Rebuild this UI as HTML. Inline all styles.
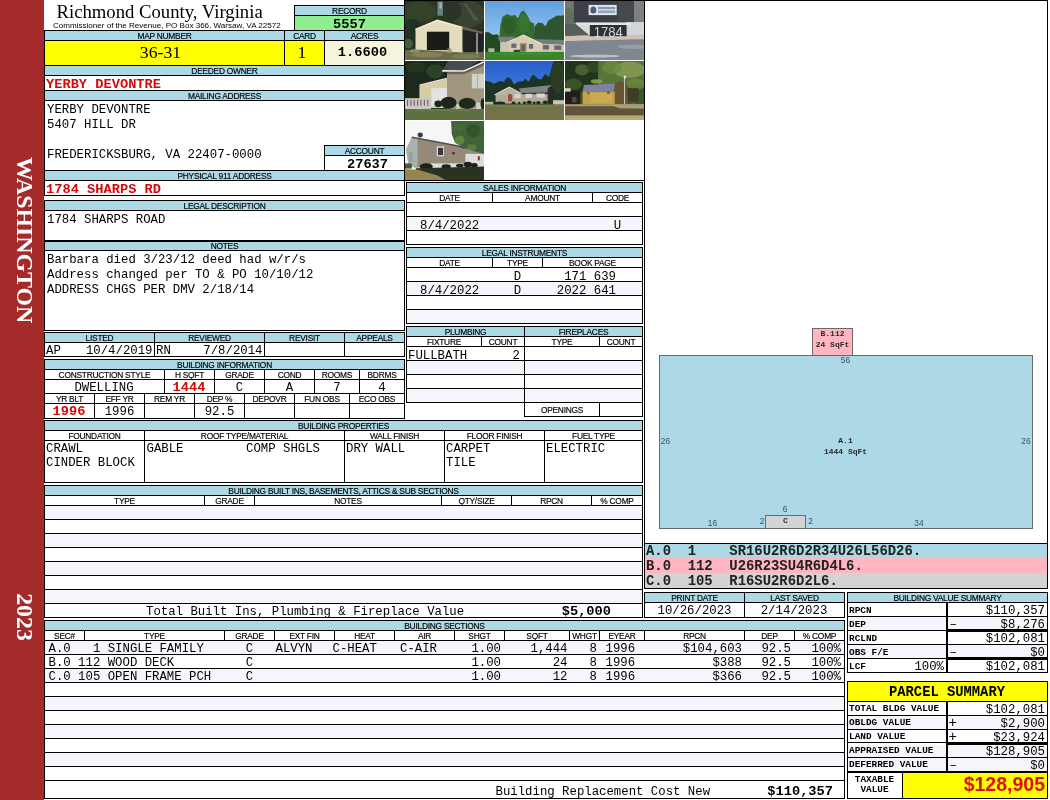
<!DOCTYPE html>
<html><head><meta charset="utf-8"><title>Property Card</title>
<style>
*{box-sizing:border-box;margin:0;padding:0}
html,body{width:1050px;height:800px;overflow:hidden;background:#fff}
body{position:relative;font-family:"Liberation Sans",sans-serif;will-change:transform}
.a{position:absolute}
</style></head><body>
<div class="a" style="left:0px;top:0px;width:44px;height:800px;background:#a52a2a;"></div>
<div class="a" style="left:0;top:0;width:44px;height:800px;"><div class="a" style="left:25px;top:240px;width:0;height:0;"><div style="position:absolute;transform:translate(-50%,-50%) rotate(90deg);font:bold 23.8px/28px 'Liberation Serif',serif;color:#fff;white-space:pre;">WASHINGTON</div></div><div class="a" style="left:25px;top:617px;width:0;height:0;"><div style="position:absolute;transform:translate(-50%,-50%) rotate(90deg);font:bold 23.8px/28px 'Liberation Serif',serif;color:#fff;white-space:pre;">2023</div></div></div>
<div class="a" style="top:1px;font:18.7px/22px 'Liberation Serif',serif;color:#000;white-space:pre;left:56.5px;">Richmond County, Virginia</div>
<div class="a" style="top:21px;font:8.05px/10px 'Liberation Sans',sans-serif;color:#000;white-space:pre;left:53px;">Commissioner of the Revenue, PO Box 366, Warsaw, VA 22572</div>
<div class="a" style="left:294px;top:5px;width:111px;height:26px;background:#90ee90;border:1px solid #000;"></div>
<div class="a" style="left:294px;top:5px;width:111px;height:11px;background:#add8e6;border:1px solid #000;"></div>
<div class="a" style="top:6px;font:8.4px/10px 'Liberation Sans',sans-serif;color:#000;white-space:pre;left:274.5px;width:150px;text-align:center;letter-spacing:-0.25px;-webkit-text-stroke:0.15px #000;">RECORD</div>
<div class="a" style="top:17px;font:bold 13.7px/16px 'Liberation Mono',monospace;color:#000;white-space:pre;left:299.5px;width:100px;text-align:center;">5557</div>
<div class="a" style="left:44px;top:30px;width:361px;height:11px;background:#add8e6;border:1px solid #000;"></div>
<div class="a" style="top:31px;font:8.4px/10px 'Liberation Sans',sans-serif;color:#000;white-space:pre;left:24.5px;width:280px;text-align:center;letter-spacing:-0.25px;-webkit-text-stroke:0.15px #000;">MAP NUMBER</div>
<div class="a" style="top:31px;font:8.4px/10px 'Liberation Sans',sans-serif;color:#000;white-space:pre;left:264.5px;width:80px;text-align:center;letter-spacing:-0.25px;-webkit-text-stroke:0.15px #000;">CARD</div>
<div class="a" style="top:31px;font:8.4px/10px 'Liberation Sans',sans-serif;color:#000;white-space:pre;left:304.5px;width:120px;text-align:center;letter-spacing:-0.25px;-webkit-text-stroke:0.15px #000;">ACRES</div>
<div class="a" style="left:44px;top:40px;width:241px;height:26px;background:#ffff00;border:1px solid #000;"></div>
<div class="a" style="left:284px;top:40px;width:41px;height:26px;background:#ffff00;border:1px solid #000;"></div>
<div class="a" style="left:324px;top:40px;width:81px;height:26px;background:#f5f5dc;border:1px solid #000;"></div>
<div class="a" style="left:284px;top:30px;width:1px;height:11px;background:#000"></div>
<div class="a" style="left:324px;top:30px;width:1px;height:11px;background:#000"></div>
<div class="a" style="top:42px;font:17.7px/21px 'Liberation Serif',serif;color:#000;white-space:pre;left:110.5px;width:100px;text-align:center;">36-31</div>
<div class="a" style="top:42px;font:17.7px/21px 'Liberation Serif',serif;color:#000;white-space:pre;left:282.0px;width:40px;text-align:center;">1</div>
<div class="a" style="top:45px;font:bold 13.7px/16px 'Liberation Mono',monospace;color:#000;white-space:pre;left:322.5px;width:80px;text-align:center;">1.6600</div>
<div class="a" style="left:44px;top:65px;width:361px;height:11px;background:#add8e6;border:1px solid #000;"></div>
<div class="a" style="top:66px;font:8.4px/10px 'Liberation Sans',sans-serif;color:#000;white-space:pre;left:24.5px;width:400px;text-align:center;letter-spacing:-0.25px;-webkit-text-stroke:0.15px #000;">DEEDED OWNER</div>
<div class="a" style="left:44px;top:75px;width:361px;height:16px;border:1px solid #000;"></div>
<div class="a" style="top:77px;font:bold 13.7px/16px 'Liberation Mono',monospace;color:#d80808;white-space:pre;left:46px;">YERBY DEVONTRE</div>
<div class="a" style="left:44px;top:90px;width:361px;height:11px;background:#add8e6;border:1px solid #000;"></div>
<div class="a" style="top:91px;font:8.4px/10px 'Liberation Sans',sans-serif;color:#000;white-space:pre;left:24.5px;width:400px;text-align:center;letter-spacing:-0.25px;-webkit-text-stroke:0.15px #000;">MAILING ADDRESS</div>
<div class="a" style="left:44px;top:100px;width:361px;height:71px;border:1px solid #000;"></div>
<div class="a" style="top:103px;font:12.33px/15px 'Liberation Mono',monospace;color:#000;white-space:pre;left:47px;">YERBY DEVONTRE</div>
<div class="a" style="top:118px;font:12.33px/15px 'Liberation Mono',monospace;color:#000;white-space:pre;left:47px;">5407 HILL DR</div>
<div class="a" style="top:148px;font:12.33px/15px 'Liberation Mono',monospace;color:#000;white-space:pre;left:47px;">FREDERICKSBURG, VA 22407-0000</div>
<div class="a" style="left:324px;top:145px;width:81px;height:26px;background:#fff;border:1px solid #000;"></div>
<div class="a" style="left:324px;top:145px;width:81px;height:11px;background:#add8e6;border:1px solid #000;"></div>
<div class="a" style="top:146px;font:8.4px/10px 'Liberation Sans',sans-serif;color:#000;white-space:pre;left:304.5px;width:120px;text-align:center;letter-spacing:-0.25px;-webkit-text-stroke:0.15px #000;">ACCOUNT</div>
<div class="a" style="top:157px;font:bold 13.7px/16px 'Liberation Mono',monospace;color:#000;white-space:pre;left:327.5px;width:80px;text-align:center;">27637</div>
<div class="a" style="left:44px;top:170px;width:361px;height:11px;background:#add8e6;border:1px solid #000;"></div>
<div class="a" style="top:171px;font:8.4px/10px 'Liberation Sans',sans-serif;color:#000;white-space:pre;left:24.5px;width:400px;text-align:center;letter-spacing:-0.25px;-webkit-text-stroke:0.15px #000;">PHYSICAL 911 ADDRESS</div>
<div class="a" style="left:44px;top:180px;width:361px;height:16px;border:1px solid #000;"></div>
<div class="a" style="top:182px;font:bold 13.7px/16px 'Liberation Mono',monospace;color:#d80808;white-space:pre;left:46px;">1784 SHARPS RD</div>
<div class="a" style="left:44px;top:200px;width:361px;height:11px;background:#add8e6;border:1px solid #000;"></div>
<div class="a" style="top:201px;font:8.4px/10px 'Liberation Sans',sans-serif;color:#000;white-space:pre;left:24.5px;width:400px;text-align:center;letter-spacing:-0.25px;-webkit-text-stroke:0.15px #000;">LEGAL DESCRIPTION</div>
<div class="a" style="left:44px;top:210px;width:361px;height:31px;border:1px solid #000;"></div>
<div class="a" style="top:213px;font:12.33px/15px 'Liberation Mono',monospace;color:#000;white-space:pre;left:47px;">1784 SHARPS ROAD</div>
<div class="a" style="left:44px;top:241px;width:361px;height:10px;background:#add8e6;border:1px solid #000;"></div>
<div class="a" style="top:241px;font:8.4px/10px 'Liberation Sans',sans-serif;color:#000;white-space:pre;left:24.5px;width:400px;text-align:center;letter-spacing:-0.25px;-webkit-text-stroke:0.15px #000;">NOTES</div>
<div class="a" style="left:44px;top:250px;width:361px;height:81px;border:1px solid #000;"></div>
<div class="a" style="top:253px;font:12.33px/15px 'Liberation Mono',monospace;color:#000;white-space:pre;left:47px;">Barbara died 3/23/12 deed had w/r/s</div>
<div class="a" style="top:268px;font:12.33px/15px 'Liberation Mono',monospace;color:#000;white-space:pre;left:47px;">Address changed per TO &amp; PO 10/10/12</div>
<div class="a" style="top:283px;font:12.33px/15px 'Liberation Mono',monospace;color:#000;white-space:pre;left:47px;">ADDRESS CHGS PER DMV 2/18/14</div>
<div class="a" style="left:44px;top:332px;width:361px;height:11px;background:#add8e6;border:1px solid #000;"></div>
<div class="a" style="left:44px;top:342px;width:361px;height:15px;border:1px solid #000;"></div>
<div class="a" style="left:154px;top:332px;width:1px;height:25px;background:#000"></div>
<div class="a" style="left:264px;top:332px;width:1px;height:25px;background:#000"></div>
<div class="a" style="left:344px;top:332px;width:1px;height:25px;background:#000"></div>
<div class="a" style="top:333px;font:8.4px/10px 'Liberation Sans',sans-serif;color:#000;white-space:pre;left:24.5px;width:150px;text-align:center;letter-spacing:-0.25px;-webkit-text-stroke:0.15px #000;">LISTED</div>
<div class="a" style="top:333px;font:8.4px/10px 'Liberation Sans',sans-serif;color:#000;white-space:pre;left:134.5px;width:150px;text-align:center;letter-spacing:-0.25px;-webkit-text-stroke:0.15px #000;">REVIEWED</div>
<div class="a" style="top:333px;font:8.4px/10px 'Liberation Sans',sans-serif;color:#000;white-space:pre;left:244.5px;width:120px;text-align:center;letter-spacing:-0.25px;-webkit-text-stroke:0.15px #000;">REVISIT</div>
<div class="a" style="top:333px;font:8.4px/10px 'Liberation Sans',sans-serif;color:#000;white-space:pre;left:324.5px;width:100px;text-align:center;letter-spacing:-0.25px;-webkit-text-stroke:0.15px #000;">APPEALS</div>
<div class="a" style="top:344px;font:12.33px/15px 'Liberation Mono',monospace;color:#000;white-space:pre;left:46px;">AP</div>
<div class="a" style="top:344px;font:12.33px/15px 'Liberation Mono',monospace;color:#000;white-space:pre;right:897.5px;text-align:right;">10/4/2019</div>
<div class="a" style="top:344px;font:12.33px/15px 'Liberation Mono',monospace;color:#000;white-space:pre;left:156px;">RN</div>
<div class="a" style="top:344px;font:12.33px/15px 'Liberation Mono',monospace;color:#000;white-space:pre;right:787.5px;text-align:right;">7/8/2014</div>
<div class="a" style="left:44px;top:359px;width:361px;height:11px;background:#add8e6;border:1px solid #000;"></div>
<div class="a" style="top:360px;font:8.4px/10px 'Liberation Sans',sans-serif;color:#000;white-space:pre;left:24.5px;width:400px;text-align:center;letter-spacing:-0.25px;-webkit-text-stroke:0.15px #000;">BUILDING INFORMATION</div>
<div class="a" style="left:44px;top:369px;width:361px;height:50px;border:1px solid #000;"></div>
<div class="a" style="left:44px;top:379px;width:361px;height:1px;background:#000"></div>
<div class="a" style="left:44px;top:393px;width:361px;height:1px;background:#000"></div>
<div class="a" style="left:44px;top:403px;width:361px;height:1px;background:#000"></div>
<div class="a" style="left:164px;top:369px;width:1px;height:25px;background:#000"></div>
<div class="a" style="left:214px;top:369px;width:1px;height:25px;background:#000"></div>
<div class="a" style="left:264px;top:369px;width:1px;height:25px;background:#000"></div>
<div class="a" style="left:314px;top:369px;width:1px;height:25px;background:#000"></div>
<div class="a" style="left:359px;top:369px;width:1px;height:25px;background:#000"></div>
<div class="a" style="top:370px;font:8.4px/10px 'Liberation Sans',sans-serif;color:#000;white-space:pre;left:24.5px;width:160px;text-align:center;letter-spacing:-0.25px;-webkit-text-stroke:0.15px #000;">CONSTRUCTION STYLE</div>
<div class="a" style="top:370px;font:8.4px/10px 'Liberation Sans',sans-serif;color:#000;white-space:pre;left:144.5px;width:90px;text-align:center;letter-spacing:-0.25px;-webkit-text-stroke:0.15px #000;">H SQFT</div>
<div class="a" style="top:370px;font:8.4px/10px 'Liberation Sans',sans-serif;color:#000;white-space:pre;left:194.5px;width:90px;text-align:center;letter-spacing:-0.25px;-webkit-text-stroke:0.15px #000;">GRADE</div>
<div class="a" style="top:370px;font:8.4px/10px 'Liberation Sans',sans-serif;color:#000;white-space:pre;left:244.5px;width:90px;text-align:center;letter-spacing:-0.25px;-webkit-text-stroke:0.15px #000;">COND</div>
<div class="a" style="top:370px;font:8.4px/10px 'Liberation Sans',sans-serif;color:#000;white-space:pre;left:294.5px;width:85px;text-align:center;letter-spacing:-0.25px;-webkit-text-stroke:0.15px #000;">ROOMS</div>
<div class="a" style="top:370px;font:8.4px/10px 'Liberation Sans',sans-serif;color:#000;white-space:pre;left:339.5px;width:85px;text-align:center;letter-spacing:-0.25px;-webkit-text-stroke:0.15px #000;">BDRMS</div>
<div class="a" style="left:94px;top:393px;width:1px;height:26px;background:#000"></div>
<div class="a" style="left:144px;top:393px;width:1px;height:26px;background:#000"></div>
<div class="a" style="left:194px;top:393px;width:1px;height:26px;background:#000"></div>
<div class="a" style="left:244px;top:393px;width:1px;height:26px;background:#000"></div>
<div class="a" style="left:294px;top:393px;width:1px;height:26px;background:#000"></div>
<div class="a" style="left:349px;top:393px;width:1px;height:26px;background:#000"></div>
<div class="a" style="top:394px;font:8.4px/10px 'Liberation Sans',sans-serif;color:#000;white-space:pre;left:24.5px;width:90px;text-align:center;letter-spacing:-0.25px;-webkit-text-stroke:0.15px #000;">YR BLT</div>
<div class="a" style="top:394px;font:8.4px/10px 'Liberation Sans',sans-serif;color:#000;white-space:pre;left:74.5px;width:90px;text-align:center;letter-spacing:-0.25px;-webkit-text-stroke:0.15px #000;">EFF YR</div>
<div class="a" style="top:394px;font:8.4px/10px 'Liberation Sans',sans-serif;color:#000;white-space:pre;left:124.5px;width:90px;text-align:center;letter-spacing:-0.25px;-webkit-text-stroke:0.15px #000;">REM YR</div>
<div class="a" style="top:394px;font:8.4px/10px 'Liberation Sans',sans-serif;color:#000;white-space:pre;left:174.5px;width:90px;text-align:center;letter-spacing:-0.25px;-webkit-text-stroke:0.15px #000;">DEP %</div>
<div class="a" style="top:394px;font:8.4px/10px 'Liberation Sans',sans-serif;color:#000;white-space:pre;left:224.5px;width:90px;text-align:center;letter-spacing:-0.25px;-webkit-text-stroke:0.15px #000;">DEPOVR</div>
<div class="a" style="top:394px;font:8.4px/10px 'Liberation Sans',sans-serif;color:#000;white-space:pre;left:274.5px;width:95px;text-align:center;letter-spacing:-0.25px;-webkit-text-stroke:0.15px #000;">FUN OBS</div>
<div class="a" style="top:394px;font:8.4px/10px 'Liberation Sans',sans-serif;color:#000;white-space:pre;left:329.5px;width:95px;text-align:center;letter-spacing:-0.25px;-webkit-text-stroke:0.15px #000;">ECO OBS</div>
<div class="a" style="top:381px;font:12.33px/15px 'Liberation Mono',monospace;color:#000;white-space:pre;left:44.0px;width:120px;text-align:center;">DWELLING</div>
<div class="a" style="top:380px;font:bold 13.7px/16px 'Liberation Mono',monospace;color:#d80808;white-space:pre;left:159.0px;width:60px;text-align:center;">1444</div>
<div class="a" style="top:381px;font:12.33px/15px 'Liberation Mono',monospace;color:#000;white-space:pre;left:219.5px;width:40px;text-align:center;">C</div>
<div class="a" style="top:381px;font:12.33px/15px 'Liberation Mono',monospace;color:#000;white-space:pre;left:269.5px;width:40px;text-align:center;">A</div>
<div class="a" style="top:381px;font:12.33px/15px 'Liberation Mono',monospace;color:#000;white-space:pre;left:317.0px;width:40px;text-align:center;">7</div>
<div class="a" style="top:381px;font:12.33px/15px 'Liberation Mono',monospace;color:#000;white-space:pre;left:362.0px;width:40px;text-align:center;">4</div>
<div class="a" style="top:404px;font:bold 13.7px/16px 'Liberation Mono',monospace;color:#d80808;white-space:pre;left:39.0px;width:60px;text-align:center;">1996</div>
<div class="a" style="top:405px;font:12.33px/15px 'Liberation Mono',monospace;color:#000;white-space:pre;left:89.5px;width:60px;text-align:center;">1996</div>
<div class="a" style="top:405px;font:12.33px/15px 'Liberation Mono',monospace;color:#000;white-space:pre;left:189.5px;width:60px;text-align:center;">92.5</div>
<div class="a" style="left:44px;top:420px;width:599px;height:11px;background:#add8e6;border:1px solid #000;"></div>
<div class="a" style="top:421px;font:8.4px/10px 'Liberation Sans',sans-serif;color:#000;white-space:pre;left:24.5px;width:638px;text-align:center;letter-spacing:-0.25px;-webkit-text-stroke:0.15px #000;">BUILDING PROPERTIES</div>
<div class="a" style="left:44px;top:430px;width:599px;height:53px;border:1px solid #000;"></div>
<div class="a" style="left:44px;top:440px;width:599px;height:1px;background:#000"></div>
<div class="a" style="left:144px;top:430px;width:1px;height:53px;background:#000"></div>
<div class="a" style="left:344px;top:430px;width:1px;height:53px;background:#000"></div>
<div class="a" style="left:444px;top:430px;width:1px;height:53px;background:#000"></div>
<div class="a" style="left:544px;top:430px;width:1px;height:53px;background:#000"></div>
<div class="a" style="top:431px;font:8.4px/10px 'Liberation Sans',sans-serif;color:#000;white-space:pre;left:24.5px;width:140px;text-align:center;letter-spacing:-0.25px;-webkit-text-stroke:0.15px #000;">FOUNDATION</div>
<div class="a" style="top:431px;font:8.4px/10px 'Liberation Sans',sans-serif;color:#000;white-space:pre;left:124.5px;width:240px;text-align:center;letter-spacing:-0.25px;-webkit-text-stroke:0.15px #000;">ROOF TYPE/MATERIAL</div>
<div class="a" style="top:431px;font:8.4px/10px 'Liberation Sans',sans-serif;color:#000;white-space:pre;left:324.5px;width:140px;text-align:center;letter-spacing:-0.25px;-webkit-text-stroke:0.15px #000;">WALL FINISH</div>
<div class="a" style="top:431px;font:8.4px/10px 'Liberation Sans',sans-serif;color:#000;white-space:pre;left:424.5px;width:140px;text-align:center;letter-spacing:-0.25px;-webkit-text-stroke:0.15px #000;">FLOOR FINISH</div>
<div class="a" style="top:431px;font:8.4px/10px 'Liberation Sans',sans-serif;color:#000;white-space:pre;left:524.5px;width:138px;text-align:center;letter-spacing:-0.25px;-webkit-text-stroke:0.15px #000;">FUEL TYPE</div>
<div class="a" style="top:442px;font:12.33px/15px 'Liberation Mono',monospace;color:#000;white-space:pre;left:46px;">CRAWL</div>
<div class="a" style="top:456px;font:12.33px/15px 'Liberation Mono',monospace;color:#000;white-space:pre;left:46px;">CINDER BLOCK</div>
<div class="a" style="top:442px;font:12.33px/15px 'Liberation Mono',monospace;color:#000;white-space:pre;left:146.5px;">GABLE</div>
<div class="a" style="top:442px;font:12.33px/15px 'Liberation Mono',monospace;color:#000;white-space:pre;left:246px;">COMP SHGLS</div>
<div class="a" style="top:442px;font:12.33px/15px 'Liberation Mono',monospace;color:#000;white-space:pre;left:346px;">DRY WALL</div>
<div class="a" style="top:442px;font:12.33px/15px 'Liberation Mono',monospace;color:#000;white-space:pre;left:446px;">CARPET</div>
<div class="a" style="top:456px;font:12.33px/15px 'Liberation Mono',monospace;color:#000;white-space:pre;left:446px;">TILE</div>
<div class="a" style="top:442px;font:12.33px/15px 'Liberation Mono',monospace;color:#000;white-space:pre;left:546px;">ELECTRIC</div>
<div class="a" style="left:44px;top:485px;width:599px;height:11px;background:#add8e6;border:1px solid #000;"></div>
<div class="a" style="top:486px;font:8.4px/10px 'Liberation Sans',sans-serif;color:#000;white-space:pre;left:24.5px;width:638px;text-align:center;letter-spacing:-0.25px;-webkit-text-stroke:0.15px #000;">BUILDING BUILT INS, BASEMENTS, ATTICS &amp; SUB SECTIONS</div>
<div class="a" style="left:44px;top:495px;width:599px;height:123px;border:1px solid #000;"></div>
<div class="a" style="left:204px;top:495px;width:1px;height:11px;background:#000"></div>
<div class="a" style="left:254px;top:495px;width:1px;height:11px;background:#000"></div>
<div class="a" style="left:441px;top:495px;width:1px;height:11px;background:#000"></div>
<div class="a" style="left:511px;top:495px;width:1px;height:11px;background:#000"></div>
<div class="a" style="left:591px;top:495px;width:1px;height:11px;background:#000"></div>
<div class="a" style="top:496px;font:8.4px/10px 'Liberation Sans',sans-serif;color:#000;white-space:pre;left:24.5px;width:200px;text-align:center;letter-spacing:-0.25px;-webkit-text-stroke:0.15px #000;">TYPE</div>
<div class="a" style="top:496px;font:8.4px/10px 'Liberation Sans',sans-serif;color:#000;white-space:pre;left:184.5px;width:90px;text-align:center;letter-spacing:-0.25px;-webkit-text-stroke:0.15px #000;">GRADE</div>
<div class="a" style="top:496px;font:8.4px/10px 'Liberation Sans',sans-serif;color:#000;white-space:pre;left:234.5px;width:227px;text-align:center;letter-spacing:-0.25px;-webkit-text-stroke:0.15px #000;">NOTES</div>
<div class="a" style="top:496px;font:8.4px/10px 'Liberation Sans',sans-serif;color:#000;white-space:pre;left:421.5px;width:110px;text-align:center;letter-spacing:-0.25px;-webkit-text-stroke:0.15px #000;">QTY/SIZE</div>
<div class="a" style="top:496px;font:8.4px/10px 'Liberation Sans',sans-serif;color:#000;white-space:pre;left:491.5px;width:120px;text-align:center;letter-spacing:-0.25px;-webkit-text-stroke:0.15px #000;">RPCN</div>
<div class="a" style="top:496px;font:8.4px/10px 'Liberation Sans',sans-serif;color:#000;white-space:pre;left:571.5px;width:91px;text-align:center;letter-spacing:-0.25px;-webkit-text-stroke:0.15px #000;">% COMP</div>
<div class="a" style="left:45px;top:506px;width:597px;height:13px;background:#f5f5fc;"></div>
<div class="a" style="left:44px;top:505px;width:599px;height:1px;background:#000"></div>
<div class="a" style="left:44px;top:519px;width:599px;height:1px;background:#000"></div>
<div class="a" style="left:45px;top:534px;width:597px;height:13px;background:#f5f5fc;"></div>
<div class="a" style="left:44px;top:533px;width:599px;height:1px;background:#000"></div>
<div class="a" style="left:44px;top:547px;width:599px;height:1px;background:#000"></div>
<div class="a" style="left:45px;top:562px;width:597px;height:13px;background:#f5f5fc;"></div>
<div class="a" style="left:44px;top:561px;width:599px;height:1px;background:#000"></div>
<div class="a" style="left:44px;top:575px;width:599px;height:1px;background:#000"></div>
<div class="a" style="left:45px;top:590px;width:597px;height:13px;background:#f5f5fc;"></div>
<div class="a" style="left:44px;top:589px;width:599px;height:1px;background:#000"></div>
<div class="a" style="left:44px;top:603px;width:599px;height:1px;background:#000"></div>
<div class="a" style="top:605px;font:12.33px/15px 'Liberation Mono',monospace;color:#000;white-space:pre;left:146px;">Total Built Ins, Plumbing &amp; Fireplace Value</div>
<div class="a" style="top:604px;font:bold 13.7px/16px 'Liberation Mono',monospace;color:#000;white-space:pre;right:439px;text-align:right;">$5,000</div>
<div class="a" style="left:44px;top:620px;width:801px;height:11px;background:#add8e6;border:1px solid #000;"></div>
<div class="a" style="top:621px;font:8.4px/10px 'Liberation Sans',sans-serif;color:#000;white-space:pre;left:24.5px;width:840px;text-align:center;letter-spacing:-0.25px;-webkit-text-stroke:0.15px #000;">BUILDING SECTIONS</div>
<div class="a" style="left:44px;top:630px;width:801px;height:169px;border:1px solid #000;"></div>
<div class="a" style="left:84px;top:630px;width:1px;height:11px;background:#000"></div>
<div class="a" style="left:224px;top:630px;width:1px;height:11px;background:#000"></div>
<div class="a" style="left:274px;top:630px;width:1px;height:11px;background:#000"></div>
<div class="a" style="left:334px;top:630px;width:1px;height:11px;background:#000"></div>
<div class="a" style="left:394px;top:630px;width:1px;height:11px;background:#000"></div>
<div class="a" style="left:454px;top:630px;width:1px;height:11px;background:#000"></div>
<div class="a" style="left:504px;top:630px;width:1px;height:11px;background:#000"></div>
<div class="a" style="left:569px;top:630px;width:1px;height:11px;background:#000"></div>
<div class="a" style="left:599px;top:630px;width:1px;height:11px;background:#000"></div>
<div class="a" style="left:644px;top:630px;width:1px;height:11px;background:#000"></div>
<div class="a" style="left:744px;top:630px;width:1px;height:11px;background:#000"></div>
<div class="a" style="left:794px;top:630px;width:1px;height:11px;background:#000"></div>
<div class="a" style="top:631px;font:8.4px/10px 'Liberation Sans',sans-serif;color:#000;white-space:pre;left:24.5px;width:80px;text-align:center;letter-spacing:-0.25px;-webkit-text-stroke:0.15px #000;">SEC#</div>
<div class="a" style="top:631px;font:8.4px/10px 'Liberation Sans',sans-serif;color:#000;white-space:pre;left:64.5px;width:180px;text-align:center;letter-spacing:-0.25px;-webkit-text-stroke:0.15px #000;">TYPE</div>
<div class="a" style="top:631px;font:8.4px/10px 'Liberation Sans',sans-serif;color:#000;white-space:pre;left:204.5px;width:90px;text-align:center;letter-spacing:-0.25px;-webkit-text-stroke:0.15px #000;">GRADE</div>
<div class="a" style="top:631px;font:8.4px/10px 'Liberation Sans',sans-serif;color:#000;white-space:pre;left:254.5px;width:100px;text-align:center;letter-spacing:-0.25px;-webkit-text-stroke:0.15px #000;">EXT FIN</div>
<div class="a" style="top:631px;font:8.4px/10px 'Liberation Sans',sans-serif;color:#000;white-space:pre;left:314.5px;width:100px;text-align:center;letter-spacing:-0.25px;-webkit-text-stroke:0.15px #000;">HEAT</div>
<div class="a" style="top:631px;font:8.4px/10px 'Liberation Sans',sans-serif;color:#000;white-space:pre;left:374.5px;width:100px;text-align:center;letter-spacing:-0.25px;-webkit-text-stroke:0.15px #000;">AIR</div>
<div class="a" style="top:631px;font:8.4px/10px 'Liberation Sans',sans-serif;color:#000;white-space:pre;left:434.5px;width:90px;text-align:center;letter-spacing:-0.25px;-webkit-text-stroke:0.15px #000;">SHGT</div>
<div class="a" style="top:631px;font:8.4px/10px 'Liberation Sans',sans-serif;color:#000;white-space:pre;left:484.5px;width:105px;text-align:center;letter-spacing:-0.25px;-webkit-text-stroke:0.15px #000;">SQFT</div>
<div class="a" style="top:631px;font:8.4px/10px 'Liberation Sans',sans-serif;color:#000;white-space:pre;left:549.5px;width:70px;text-align:center;letter-spacing:-0.25px;-webkit-text-stroke:0.15px #000;">WHGT</div>
<div class="a" style="top:631px;font:8.4px/10px 'Liberation Sans',sans-serif;color:#000;white-space:pre;left:579.5px;width:85px;text-align:center;letter-spacing:-0.25px;-webkit-text-stroke:0.15px #000;">EYEAR</div>
<div class="a" style="top:631px;font:8.4px/10px 'Liberation Sans',sans-serif;color:#000;white-space:pre;left:624.5px;width:140px;text-align:center;letter-spacing:-0.25px;-webkit-text-stroke:0.15px #000;">RPCN</div>
<div class="a" style="top:631px;font:8.4px/10px 'Liberation Sans',sans-serif;color:#000;white-space:pre;left:724.5px;width:90px;text-align:center;letter-spacing:-0.25px;-webkit-text-stroke:0.15px #000;">DEP</div>
<div class="a" style="top:631px;font:8.4px/10px 'Liberation Sans',sans-serif;color:#000;white-space:pre;left:774.5px;width:90px;text-align:center;letter-spacing:-0.25px;-webkit-text-stroke:0.15px #000;">% COMP</div>
<div class="a" style="left:45px;top:641px;width:799px;height:13px;background:#f5f5fc;"></div>
<div class="a" style="left:44px;top:640px;width:801px;height:1px;background:#000"></div>
<div class="a" style="left:44px;top:654px;width:801px;height:1px;background:#000"></div>
<div class="a" style="left:45px;top:669px;width:799px;height:13px;background:#f5f5fc;"></div>
<div class="a" style="left:44px;top:668px;width:801px;height:1px;background:#000"></div>
<div class="a" style="left:44px;top:682px;width:801px;height:1px;background:#000"></div>
<div class="a" style="left:45px;top:697px;width:799px;height:13px;background:#f5f5fc;"></div>
<div class="a" style="left:44px;top:696px;width:801px;height:1px;background:#000"></div>
<div class="a" style="left:44px;top:710px;width:801px;height:1px;background:#000"></div>
<div class="a" style="left:45px;top:725px;width:799px;height:13px;background:#f5f5fc;"></div>
<div class="a" style="left:44px;top:724px;width:801px;height:1px;background:#000"></div>
<div class="a" style="left:44px;top:738px;width:801px;height:1px;background:#000"></div>
<div class="a" style="left:45px;top:753px;width:799px;height:13px;background:#f5f5fc;"></div>
<div class="a" style="left:44px;top:752px;width:801px;height:1px;background:#000"></div>
<div class="a" style="left:44px;top:766px;width:801px;height:1px;background:#000"></div>
<div class="a" style="left:44px;top:780px;width:801px;height:1px;background:#000"></div>
<div class="a" style="top:642px;font:12.33px/15px 'Liberation Mono',monospace;color:#000;white-space:pre;left:48.5px;">A.0   1 SINGLE FAMILY</div>
<div class="a" style="top:642px;font:12.33px/15px 'Liberation Mono',monospace;color:#000;white-space:pre;left:229.5px;width:40px;text-align:center;">C</div>
<div class="a" style="top:642px;font:12.33px/15px 'Liberation Mono',monospace;color:#000;white-space:pre;left:275.5px;">ALVYN</div>
<div class="a" style="top:642px;font:12.33px/15px 'Liberation Mono',monospace;color:#000;white-space:pre;left:332.5px;">C-HEAT</div>
<div class="a" style="top:642px;font:12.33px/15px 'Liberation Mono',monospace;color:#000;white-space:pre;left:400px;">C-AIR</div>
<div class="a" style="top:642px;font:12.33px/15px 'Liberation Mono',monospace;color:#000;white-space:pre;right:549px;text-align:right;">1.00</div>
<div class="a" style="top:642px;font:12.33px/15px 'Liberation Mono',monospace;color:#000;white-space:pre;right:482.5px;text-align:right;">1,444</div>
<div class="a" style="top:642px;font:12.33px/15px 'Liberation Mono',monospace;color:#000;white-space:pre;right:453px;text-align:right;">8</div>
<div class="a" style="top:642px;font:12.33px/15px 'Liberation Mono',monospace;color:#000;white-space:pre;left:605.5px;">1996</div>
<div class="a" style="top:642px;font:12.33px/15px 'Liberation Mono',monospace;color:#000;white-space:pre;right:308px;text-align:right;">$104,603</div>
<div class="a" style="top:642px;font:12.33px/15px 'Liberation Mono',monospace;color:#000;white-space:pre;right:259px;text-align:right;">92.5</div>
<div class="a" style="top:642px;font:12.33px/15px 'Liberation Mono',monospace;color:#000;white-space:pre;right:209px;text-align:right;">100%</div>
<div class="a" style="top:656px;font:12.33px/15px 'Liberation Mono',monospace;color:#000;white-space:pre;left:48.5px;">B.0 112 WOOD DECK</div>
<div class="a" style="top:656px;font:12.33px/15px 'Liberation Mono',monospace;color:#000;white-space:pre;left:229.5px;width:40px;text-align:center;">C</div>
<div class="a" style="top:656px;font:12.33px/15px 'Liberation Mono',monospace;color:#000;white-space:pre;left:275.5px;"></div>
<div class="a" style="top:656px;font:12.33px/15px 'Liberation Mono',monospace;color:#000;white-space:pre;left:332.5px;"></div>
<div class="a" style="top:656px;font:12.33px/15px 'Liberation Mono',monospace;color:#000;white-space:pre;left:400px;"></div>
<div class="a" style="top:656px;font:12.33px/15px 'Liberation Mono',monospace;color:#000;white-space:pre;right:549px;text-align:right;">1.00</div>
<div class="a" style="top:656px;font:12.33px/15px 'Liberation Mono',monospace;color:#000;white-space:pre;right:482.5px;text-align:right;">24</div>
<div class="a" style="top:656px;font:12.33px/15px 'Liberation Mono',monospace;color:#000;white-space:pre;right:453px;text-align:right;">8</div>
<div class="a" style="top:656px;font:12.33px/15px 'Liberation Mono',monospace;color:#000;white-space:pre;left:605.5px;">1996</div>
<div class="a" style="top:656px;font:12.33px/15px 'Liberation Mono',monospace;color:#000;white-space:pre;right:308px;text-align:right;">$388</div>
<div class="a" style="top:656px;font:12.33px/15px 'Liberation Mono',monospace;color:#000;white-space:pre;right:259px;text-align:right;">92.5</div>
<div class="a" style="top:656px;font:12.33px/15px 'Liberation Mono',monospace;color:#000;white-space:pre;right:209px;text-align:right;">100%</div>
<div class="a" style="top:670px;font:12.33px/15px 'Liberation Mono',monospace;color:#000;white-space:pre;left:48.5px;">C.0 105 OPEN FRAME PCH</div>
<div class="a" style="top:670px;font:12.33px/15px 'Liberation Mono',monospace;color:#000;white-space:pre;left:229.5px;width:40px;text-align:center;">C</div>
<div class="a" style="top:670px;font:12.33px/15px 'Liberation Mono',monospace;color:#000;white-space:pre;left:275.5px;"></div>
<div class="a" style="top:670px;font:12.33px/15px 'Liberation Mono',monospace;color:#000;white-space:pre;left:332.5px;"></div>
<div class="a" style="top:670px;font:12.33px/15px 'Liberation Mono',monospace;color:#000;white-space:pre;left:400px;"></div>
<div class="a" style="top:670px;font:12.33px/15px 'Liberation Mono',monospace;color:#000;white-space:pre;right:549px;text-align:right;">1.00</div>
<div class="a" style="top:670px;font:12.33px/15px 'Liberation Mono',monospace;color:#000;white-space:pre;right:482.5px;text-align:right;">12</div>
<div class="a" style="top:670px;font:12.33px/15px 'Liberation Mono',monospace;color:#000;white-space:pre;right:453px;text-align:right;">8</div>
<div class="a" style="top:670px;font:12.33px/15px 'Liberation Mono',monospace;color:#000;white-space:pre;left:605.5px;">1996</div>
<div class="a" style="top:670px;font:12.33px/15px 'Liberation Mono',monospace;color:#000;white-space:pre;right:308px;text-align:right;">$366</div>
<div class="a" style="top:670px;font:12.33px/15px 'Liberation Mono',monospace;color:#000;white-space:pre;right:259px;text-align:right;">92.5</div>
<div class="a" style="top:670px;font:12.33px/15px 'Liberation Mono',monospace;color:#000;white-space:pre;right:209px;text-align:right;">100%</div>
<div class="a" style="top:785px;font:12.33px/15px 'Liberation Mono',monospace;color:#000;white-space:pre;left:495.5px;">Building Replacement Cost New</div>
<div class="a" style="top:784px;font:bold 13.7px/16px 'Liberation Mono',monospace;color:#000;white-space:pre;right:217px;text-align:right;">$110,357</div>
<div class="a" style="left:404px;top:0px;width:241px;height:181px;border:1px solid #000;"></div>
<svg width="0" height="0" style="position:absolute"><defs><filter id="bl" x="-10%" y="-10%" width="120%" height="120%"><feGaussianBlur stdDeviation="0.75"/></filter></defs></svg><svg class="a" style="left:405px;top:1px" width="79" height="59" viewBox="0 0 79 59"><g filter="url(#bl)"><rect x="-9.0" y="-8.8" width="101.6" height="78.1" fill="#2b3622"/><ellipse cx="14.5" cy="10.8" rx="17.2" ry="10.2" fill="#35422a"/><ellipse cx="8.2" cy="31.9" rx="9.4" ry="14.1" fill="#223020"/><ellipse cx="3.5" cy="42.8" rx="4.7" ry="4.7" fill="#4a5a3a"/><ellipse cx="62.9" cy="13.1" rx="17.2" ry="13.3" fill="#3a4232"/><ellipse cx="47.3" cy="10.0" rx="9.4" ry="9.4" fill="#2c3526"/><rect x="32.4" y="0.6" width="5.5" height="14.1" fill="#7d949c" opacity="0.8"/><rect x="34.4" y="1.4" width="2.3" height="6.2" fill="#a9c0c8" opacity="0.8"/><polygon points="58.2,2.2 61.3,2.2 73.8,19.4 69.1,19.4" fill="#5c6458" opacity="0.6"/><rect x="-9.0" y="49.1" width="101.6" height="20.3" fill="#6d6c48"/><ellipse cx="22.3" cy="53.8" rx="15.6" ry="2.7" fill="#8d8a62" opacity="0.7"/><ellipse cx="61.3" cy="55.3" rx="14.1" ry="2.3" fill="#7f8458" opacity="0.7"/><ellipse cx="9.8" cy="49.8" rx="5.5" ry="2.0" fill="#a9a488" opacity="0.6"/><rect x="58.2" y="28.8" width="19.7" height="22.3" fill="#242424"/><polygon points="57.4,25.2 77.3,30.7 77.3,32.8 57.4,28.6" fill="#6b6450"/><rect x="71.3" y="31.9" width="1.4" height="21.1" fill="#b9b9b1"/><polygon points="10.5,28.1 32.4,19.0 57.4,26.4 57.4,51.6 10.5,48.4" fill="#e4dcbe"/><polyline points="10.5,28.3 32.4,19.1 57.4,26.4" fill="none" stroke="#f3eedd" stroke-width="1.3"/><rect x="21.9" y="30.7" width="22.3" height="18.4" fill="#1b1a17"/><rect x="42.2" y="47.5" width="4.3" height="4.7" fill="#8d8f72" opacity="0.8"/></g></svg><svg class="a" style="left:485px;top:1px" width="79" height="59" viewBox="0 0 79 59"><defs><linearGradient id="s2" x1="0" y1="0" x2="0" y2="1"><stop offset="0" stop-color="#5b9be0"/><stop offset="0.7" stop-color="#9ccbf2"/></linearGradient></defs><g filter="url(#bl)"><rect x="-5" y="-5" width="90" height="70" fill="url(#s2)"/><polygon points="48.6,39.5 49.4,25.4 53.3,21.5 58.0,22.3 60.3,25.4 63.4,19.5 67.3,17.2 72.0,14.5 76.7,14.8 79.8,13.7 79.8,41.0 48.6,41.0" fill="#2f552f"/><polygon points="14.2,37.9 15.4,24.6 17.3,16.0 22.0,12.9 26.7,14.8 29.8,13.7 33.0,17.2 36.1,10.5 39.2,9.8 42.3,14.5 45.5,21.1 49.0,22.3 49.4,37.9" fill="#34692f"/><ellipse cx="24.4" cy="24.6" rx="7.0" ry="8.6" fill="#2c5a2a" opacity="0.8"/><ellipse cx="39.2" cy="22.3" rx="5.5" ry="9.4" fill="#3c7a38" opacity="0.7"/><polygon points="-1.4,31.6 3.3,30.9 8.0,34.0 11.9,33.2 15.4,36.3 15.4,52.7 -1.4,52.7" fill="#224821"/><polygon points="12.7,35.9 30.2,35.5 24.8,41.4 15.0,41.4" fill="#78817d"/><polygon points="46.6,37.9 79.8,39.1 79.8,44.3 56.4,43.0" fill="#737d7b"/><polygon points="15.4,41.0 79.8,43.8 79.8,51.0 15.4,51.0" fill="#ccc5ad"/><polygon points="24.4,41.6 38.4,34.1 56.8,43.0 56.8,51.0 24.4,51.0" fill="#d5ceb5"/><polyline points="22.0,41.6 38.4,34.1 56.8,43.0" fill="none" stroke="#eeeade" stroke-width="1.1"/><rect x="26.3" y="42.6" width="5.1" height="4.3" fill="#6f6878"/><rect x="34.9" y="42.3" width="6.6" height="8.3" fill="#8b8476"/><rect x="36.9" y="43.8" width="2.7" height="6.6" fill="#5f5a52"/><rect x="43.9" y="43.0" width="4.3" height="4.7" fill="#6f6878"/><rect x="58.0" y="44.1" width="5.9" height="4.4" fill="#6b6571"/><rect x="69.3" y="44.5" width="7.0" height="4.3" fill="#6b6571"/><rect x="28.7" y="48.8" width="6.6" height="2.2" fill="#3a3a38"/><rect x="3.3" y="47.3" width="6.2" height="4.7" fill="#c6cec6" opacity="0.85"/><rect x="-9.2" y="50.9" width="101.6" height="18.3" fill="#37852a"/><ellipse cx="37.7" cy="52.7" rx="31.2" ry="1.4" fill="#4a9a36" opacity="0.5"/></g></svg><svg class="a" style="left:565px;top:1px" width="79" height="59" viewBox="0 0 79 59"><g filter="url(#bl)"><rect x="-9.2" y="-9.0" width="101.6" height="78.1" fill="#8a8f92"/><rect x="-9.2" y="-9.0" width="18.8" height="44.5" fill="#6f7a6e"/><ellipse cx="3.3" cy="18.4" rx="5.5" ry="11.7" fill="#5d6a58" opacity="0.7"/><rect x="68.9" y="-9.0" width="23.4" height="30.1" fill="#7b8182"/><rect x="8.8" y="-9.0" width="60.2" height="30.6" fill="#3c4047"/><rect x="53.3" y="-9.0" width="15.6" height="30.6" fill="#4a4e54" opacity="0.6"/><rect x="23.6" y="3.9" width="28.1" height="10.2" fill="#dfe6ee"/><ellipse cx="28.3" cy="9.0" rx="3.0" ry="3.5" fill="#4b5b7c"/><rect x="33.0" y="5.9" width="17.2" height="2.3" fill="#8797b5"/><rect x="33.0" y="9.4" width="17.2" height="2.7" fill="#97a5bf"/><rect x="61.5" y="21.1" width="30.9" height="14.8" fill="#d2d6da"/><rect x="11.1" y="21.5" width="54.8" height="2.8" fill="#e6e6e6"/><rect x="11.1" y="23.8" width="14.1" height="10.5" fill="#dadada"/><polygon points="-9.2,22.3 11.1,23.2 24.0,34.1 -9.2,35.2" fill="#575f55"/><polygon points="-9.2,35.5 92.3,33.2 92.3,38.0 -9.2,40.4" fill="#cdc2b4"/><polygon points="-9.2,40.4 92.3,38.0 92.3,69.1 -9.2,69.1" fill="#7f8791"/><ellipse cx="29.8" cy="55.1" rx="25.0" ry="1.4" fill="#cdd1d5" opacity="0.8"/><ellipse cx="68.9" cy="45.7" rx="15.6" ry="2.3" fill="#a2a8ae" opacity="0.7"/><ellipse cx="14.2" cy="45.7" rx="12.5" ry="2.3" fill="#7f868e" opacity="0.6"/><rect x="24.8" y="24.0" width="36.7" height="11.2" fill="#2b3038"/><text x="28.7" y="35.5" font-family="Liberation Sans, sans-serif" font-size="14" fill="#cfd6de" textLength="29" lengthAdjust="spacingAndGlyphs">1784</text></g></svg><svg class="a" style="left:405px;top:61px" width="79" height="59" viewBox="0 0 79 59"><g filter="url(#bl)"><rect x="-9.2" y="-11.2" width="104.0" height="80.0" fill="#1e2a1b"/><ellipse cx="30.0" cy="10.4" rx="8.8" ry="7.2" fill="#2f4228" opacity="0.9"/><ellipse cx="10.8" cy="6.4" rx="9.6" ry="5.6" fill="#27351f" opacity="0.9"/><polygon points="43.6,-0.8 75.6,-0.8 59.6,9.0 37.8,9.0" fill="#474a52"/><polygon points="42.0,11.6 59.6,11.6 79.6,2.8 79.6,48.4 42.0,48.4" fill="#a1977f"/><polygon points="42.0,10.8 59.6,10.8 79.6,2.0 79.6,4.4 59.6,13.2 42.0,13.2" fill="#6a6252" opacity="0.8"/><polyline points="37.2,9.8 59.2,10.0 78.8,1.0" fill="none" stroke="#efefef" stroke-width="1.7"/><rect x="66.8" y="12.8" width="12.8" height="14.6" fill="#d2d2ca"/><rect x="72.0" y="12.8" width="0.8" height="14.6" fill="#a8a8a0"/><polygon points="14.4,24.4 42.0,17.8 42.0,47.0 14.4,47.0" fill="#d6cda6"/><polyline points="14.6,24.2 41.8,17.4" fill="none" stroke="#ece8dc" stroke-width="1.2"/><rect x="26.4" y="27.2" width="15.6" height="17.8" fill="#e3e3e3"/><rect x="-9.2" y="37.2" width="35.2" height="11.0" fill="#cfc8c8"/><rect x="2.0" y="38.8" width="1.1" height="6.0" fill="#54454c" opacity="0.8"/><rect x="5.4" y="38.8" width="1.1" height="6.0" fill="#54454c" opacity="0.8"/><rect x="8.7" y="38.8" width="1.1" height="6.0" fill="#54454c" opacity="0.8"/><rect x="12.1" y="38.8" width="1.1" height="6.0" fill="#54454c" opacity="0.8"/><rect x="15.4" y="38.8" width="1.1" height="6.0" fill="#54454c" opacity="0.8"/><rect x="18.8" y="38.8" width="1.1" height="6.0" fill="#54454c" opacity="0.8"/><rect x="22.2" y="38.8" width="1.1" height="6.0" fill="#54454c" opacity="0.8"/><rect x="51.2" y="43.2" width="3.6" height="5.0" fill="#c9c9c1"/><rect x="71.2" y="41.6" width="4.6" height="7.4" fill="#d2d2ca"/><ellipse cx="43.6" cy="41.8" rx="8.0" ry="6.1" fill="#1b281b"/><ellipse cx="62.2" cy="42.4" rx="8.5" ry="5.6" fill="#1d2b1d"/><ellipse cx="33.2" cy="42.8" rx="3.8" ry="3.4" fill="#1b261b"/><ellipse cx="78.0" cy="42.8" rx="2.4" ry="5.6" fill="#1b281b"/><rect x="-9.2" y="48.0" width="104.0" height="20.8" fill="#5d7140"/><ellipse cx="38.8" cy="48.8" rx="36.0" ry="1.1" fill="#6e8050" opacity="0.6"/></g></svg><svg class="a" style="left:485px;top:61px" width="79" height="59" viewBox="0 0 79 59"><defs><linearGradient id="s5" x1="0" y1="0" x2="0" y2="1"><stop offset="0" stop-color="#2258c8"/><stop offset="0.5" stop-color="#3f7cdc"/></linearGradient><linearGradient id="g5" x1="0" y1="0" x2="0" y2="1"><stop offset="0" stop-color="#6e7244"/><stop offset="1" stop-color="#85754e"/></linearGradient></defs><g filter="url(#bl)"><rect x="-5" y="-5" width="90" height="70" fill="url(#s5)"/><polygon points="-1.4,19.6 5.0,20.8 9.0,22.8 14.6,20.0 19.4,20.8 22.6,16.0 25.8,17.8 29.0,23.2 33.0,20.8 38.6,20.0 40.2,17.6 43.4,20.8 48.2,13.6 53.0,17.8 56.2,18.4 60.2,12.8 64.2,16.0 66.6,6.4 69.0,0.0 72.2,-1.6 79.4,-1.6 79.4,45.6 -1.4,45.6" fill="#1e3421"/><ellipse cx="72.2" cy="16.8" rx="6.4" ry="16.0" fill="#2c3f24" opacity="0.8"/><ellipse cx="22.6" cy="20.8" rx="3.2" ry="4.0" fill="#1c3050" opacity="0.5"/><ellipse cx="48.2" cy="17.6" rx="3.2" ry="3.2" fill="#1f3a2a" opacity="0.6"/><polygon points="33.8,27.6 66.7,24.0 62.3,31.5 36.2,32.0" fill="#7d8484"/><polygon points="62.6,27.6 66.7,24.2 69.9,30.4 69.1,41.8 62.6,42.2" fill="#2b2b28"/><rect x="10.6" y="33.2" width="52.0" height="9.4" fill="#b3ab9a"/><polygon points="9.4,33.9 24.2,26.0 36.3,32.4 36.3,33.9" fill="#b9b1a1"/><polyline points="9.4,33.9 24.2,26.0 36.3,32.4" fill="none" stroke="#e6e2da" stroke-width="1.0"/><rect x="29.4" y="33.0" width="6.2" height="4.2" fill="#d9d2cc"/><rect x="40.6" y="32.8" width="6.4" height="4.0" fill="#dcd6ce"/><rect x="51.4" y="32.4" width="8.4" height="4.1" fill="#dcd6ce"/><rect x="23.0" y="33.2" width="4.2" height="7.0" fill="#9a4e40"/><ellipse cx="14.6" cy="41.9" rx="5.6" ry="1.5" fill="#1a2a1a"/><ellipse cx="28.6" cy="41.9" rx="2.1" ry="1.5" fill="#1a2a1a"/><ellipse cx="34.2" cy="42.0" rx="1.2" ry="1.2" fill="#1a2a1a"/><ellipse cx="39.4" cy="41.8" rx="1.6" ry="1.2" fill="#1a2a1a"/><ellipse cx="44.2" cy="41.3" rx="2.5" ry="1.7" fill="#1a2a1a"/><ellipse cx="49.2" cy="41.7" rx="1.4" ry="1.3" fill="#1a2a1a"/><ellipse cx="53.4" cy="41.6" rx="2.1" ry="1.6" fill="#1a2a1a"/><ellipse cx="60.2" cy="41.3" rx="2.5" ry="1.7" fill="#1a2a1a"/><rect x="68.0" y="39.2" width="11.4" height="4.6" fill="#c8c4b8"/><rect x="-1.4" y="40.8" width="9.6" height="3.4" fill="#b5b6a6"/><rect x="-5" y="43.4" width="90" height="30" fill="url(#g5)"/><ellipse cx="38.6" cy="44.8" rx="38.4" ry="1.0" fill="#7d8a5a" opacity="0.6"/></g></svg><svg class="a" style="left:565px;top:61px" width="79" height="59" viewBox="0 0 79 59"><g filter="url(#bl)"><rect x="-9.2" y="-11.2" width="104.0" height="80.0" fill="#3e552a"/><rect x="-9.2" y="-11.2" width="42.4" height="42.4" fill="#24341f"/><ellipse cx="17.2" cy="8.8" rx="7.2" ry="5.6" fill="#4f6a34" opacity="0.8"/><ellipse cx="8.4" cy="23.2" rx="8.8" ry="5.6" fill="#3f5a2a" opacity="0.8"/><ellipse cx="29.2" cy="6.4" rx="7.2" ry="5.6" fill="#33482a" opacity="0.8"/><rect x="33.2" y="-11.2" width="61.6" height="34.4" fill="#55753a"/><ellipse cx="64.4" cy="8.8" rx="16.0" ry="8.0" fill="#93a355" opacity="0.7"/><ellipse cx="46.8" cy="6.4" rx="9.6" ry="6.4" fill="#6f8a44" opacity="0.8"/><ellipse cx="70.8" cy="23.2" rx="9.6" ry="5.6" fill="#6b8a3c" opacity="0.8"/><ellipse cx="31.6" cy="20.4" rx="6.0" ry="2.2" fill="#8e9e4a" opacity="0.9"/><rect x="62.8" y="27.2" width="10.8" height="13.2" fill="#3a3c28"/><polygon points="18.8,24.0 50.0,22.4 48.9,29.9 17.6,30.7" fill="#7c82a0"/><rect x="17.6" y="30.4" width="32.2" height="13.0" fill="#c2a04e"/><rect x="25.2" y="32.0" width="21.6" height="9.6" fill="#d2ae52" opacity="0.7"/><rect x="22.0" y="30.8" width="2.8" height="2.4" fill="#7a6a50"/><rect x="42.0" y="30.4" width="2.8" height="2.4" fill="#6a5a50"/><polygon points="50.0,22.6 56.6,19.8 62.2,25.8 63.0,42.9 50.0,43.5" fill="#6b5234"/><rect x="59.0" y="15.6" width="1.0" height="27.8" fill="#c9c9c1"/><ellipse cx="60.0" cy="16.0" rx="1.3" ry="1.6" fill="#e0e0d8"/><rect x="-9.2" y="30.0" width="24.4" height="19.6" fill="#261a1f"/><rect x="-9.2" y="27.2" width="14.8" height="3.4" fill="#d9d1c1"/><rect x="6.8" y="36.0" width="4.8" height="5.6" fill="#5a5a60" opacity="0.7"/><rect x="-9.2" y="43.2" width="104.0" height="25.6" fill="#b09c6c"/><rect x="-9.2" y="45.2" width="104.0" height="9.4" fill="#5e543c"/><polygon points="43.6,43.6 94.8,43.6 94.8,48.0 54.8,47.2" fill="#b09c6c"/><rect x="-9.2" y="54.6" width="104.0" height="14.2" fill="#b9a870"/><ellipse cx="67.6" cy="44.0" rx="5.6" ry="1.6" fill="#8a9aa0" opacity="0.6"/></g></svg><svg class="a" style="left:405px;top:121px" width="79" height="59" viewBox="0 0 79 59"><g filter="url(#bl)"><rect x="-9.2" y="-10.4" width="104.0" height="80.0" fill="#f6f6f4"/><polygon points="46.0,-0.8 79.6,-0.8 79.6,33.6 59.6,32.2 54.8,24.4 50.0,21.6 46.8,13.6" fill="#41633a"/><ellipse cx="54.8" cy="19.2" rx="4.8" ry="4.8" fill="#5f8a3c" opacity="0.85"/><ellipse cx="66.8" cy="26.4" rx="4.8" ry="3.2" fill="#5a8238" opacity="0.85"/><ellipse cx="68.4" cy="9.6" rx="7.2" ry="6.4" fill="#334d29" opacity="0.8"/><ellipse cx="54.0" cy="6.4" rx="4.8" ry="4.0" fill="#4a6e34" opacity="0.7"/><polygon points="12.0,17.6 53.2,25.2 79.6,33.6 79.6,43.4 12.0,46.6" fill="#958977"/><polygon points="0.8,28.4 6.8,16.2 12.6,17.6 12.6,47.8 3.6,44.6" fill="#a9b1af"/><rect x="4.4" y="31.2" width="2.8" height="9.6" fill="#8f9a94" opacity="0.8"/><polyline points="6.8,16.2 53.2,25.0 59.6,27.2" fill="none" stroke="#4c4c54" stroke-width="1.6"/><ellipse cx="15.2" cy="14.0" rx="2.6" ry="2.4" fill="#3c3c40"/><rect x="31.8" y="25.4" width="7.2" height="9.9" fill="#e0e0dc"/><rect x="33.0" y="26.8" width="5.1" height="7.3" fill="#38383e"/><rect x="46.8" y="31.2" width="3.2" height="2.1" fill="#6a3030"/><rect x="60.4" y="32.8" width="19.2" height="13.0" fill="#dcdcdc"/><rect x="72.8" y="35.2" width="2.0" height="4.2" fill="#8a3030"/><rect x="26.0" y="42.4" width="34.4" height="4.6" fill="#dedede"/><ellipse cx="21.2" cy="45.6" rx="6.6" ry="3.4" fill="#1a2218"/><ellipse cx="41.2" cy="45.4" rx="4.6" ry="2.1" fill="#1a2218"/><ellipse cx="54.8" cy="44.6" rx="3.8" ry="1.9" fill="#1a2218"/><ellipse cx="62.8" cy="43.4" rx="4.2" ry="2.6" fill="#1a2218"/><ellipse cx="69.2" cy="44.2" rx="3.4" ry="2.2" fill="#1a2218"/><rect x="-9.2" y="42.4" width="16.0" height="5.2" fill="#4a5a38"/><polygon points="10.8,47.2 79.6,45.6 79.6,69.6 10.8,69.6" fill="#2c3322"/><polygon points="-9.2,47.6 13.2,48.8 32.4,54.6 43.6,60.8 -9.2,60.8" fill="#96854f"/><ellipse cx="10.8" cy="55.2" rx="7.2" ry="1.6" fill="#8a8a50" opacity="0.6"/></g></svg>
<div class="a" style="left:406px;top:182px;width:237px;height:11px;background:#add8e6;border:1px solid #000;"></div>
<div class="a" style="top:183px;font:8.4px/10px 'Liberation Sans',sans-serif;color:#000;white-space:pre;left:386.5px;width:276px;text-align:center;letter-spacing:-0.25px;-webkit-text-stroke:0.15px #000;">SALES INFORMATION</div>
<div class="a" style="left:406px;top:192px;width:237px;height:53px;border:1px solid #000;"></div>
<div class="a" style="left:406px;top:202px;width:237px;height:1px;background:#000"></div>
<div class="a" style="left:406px;top:216px;width:237px;height:1px;background:#000"></div>
<div class="a" style="left:406px;top:230px;width:237px;height:1px;background:#000"></div>
<div class="a" style="left:407px;top:217px;width:235px;height:13px;background:#f5f5fc;"></div>
<div class="a" style="left:492px;top:192px;width:1px;height:11px;background:#000"></div>
<div class="a" style="left:592px;top:192px;width:1px;height:11px;background:#000"></div>
<div class="a" style="top:193px;font:8.4px/10px 'Liberation Sans',sans-serif;color:#000;white-space:pre;left:386.5px;width:126px;text-align:center;letter-spacing:-0.25px;-webkit-text-stroke:0.15px #000;">DATE</div>
<div class="a" style="top:193px;font:8.4px/10px 'Liberation Sans',sans-serif;color:#000;white-space:pre;left:472.5px;width:140px;text-align:center;letter-spacing:-0.25px;-webkit-text-stroke:0.15px #000;">AMOUNT</div>
<div class="a" style="top:193px;font:8.4px/10px 'Liberation Sans',sans-serif;color:#000;white-space:pre;left:572.5px;width:90px;text-align:center;letter-spacing:-0.25px;-webkit-text-stroke:0.15px #000;">CODE</div>
<div class="a" style="top:219px;font:12.33px/15px 'Liberation Mono',monospace;color:#000;white-space:pre;left:420px;">8/4/2022</div>
<div class="a" style="top:219px;font:12.33px/15px 'Liberation Mono',monospace;color:#000;white-space:pre;left:602.5px;width:30px;text-align:center;">U</div>
<div class="a" style="left:406px;top:247px;width:237px;height:11px;background:#add8e6;border:1px solid #000;"></div>
<div class="a" style="top:248px;font:8.4px/10px 'Liberation Sans',sans-serif;color:#000;white-space:pre;left:386.5px;width:276px;text-align:center;letter-spacing:-0.25px;-webkit-text-stroke:0.15px #000;">LEGAL INSTRUMENTS</div>
<div class="a" style="left:406px;top:257px;width:237px;height:67px;border:1px solid #000;"></div>
<div class="a" style="left:406px;top:267px;width:237px;height:1px;background:#000"></div>
<div class="a" style="left:406px;top:281px;width:237px;height:1px;background:#000"></div>
<div class="a" style="left:406px;top:295px;width:237px;height:1px;background:#000"></div>
<div class="a" style="left:406px;top:309px;width:237px;height:1px;background:#000"></div>
<div class="a" style="left:407px;top:282px;width:235px;height:13px;background:#f5f5fc;"></div>
<div class="a" style="left:407px;top:310px;width:235px;height:13px;background:#f5f5fc;"></div>
<div class="a" style="left:492px;top:257px;width:1px;height:11px;background:#000"></div>
<div class="a" style="left:542px;top:257px;width:1px;height:11px;background:#000"></div>
<div class="a" style="top:258px;font:8.4px/10px 'Liberation Sans',sans-serif;color:#000;white-space:pre;left:386.5px;width:126px;text-align:center;letter-spacing:-0.25px;-webkit-text-stroke:0.15px #000;">DATE</div>
<div class="a" style="top:258px;font:8.4px/10px 'Liberation Sans',sans-serif;color:#000;white-space:pre;left:472.5px;width:90px;text-align:center;letter-spacing:-0.25px;-webkit-text-stroke:0.15px #000;">TYPE</div>
<div class="a" style="top:258px;font:8.4px/10px 'Liberation Sans',sans-serif;color:#000;white-space:pre;left:522.5px;width:140px;text-align:center;letter-spacing:-0.25px;-webkit-text-stroke:0.15px #000;">BOOK PAGE</div>
<div class="a" style="top:270px;font:12.33px/15px 'Liberation Mono',monospace;color:#000;white-space:pre;left:502.5px;width:30px;text-align:center;">D</div>
<div class="a" style="top:270px;font:12.33px/15px 'Liberation Mono',monospace;color:#000;white-space:pre;right:434px;text-align:right;">171 639</div>
<div class="a" style="top:284px;font:12.33px/15px 'Liberation Mono',monospace;color:#000;white-space:pre;left:420px;">8/4/2022</div>
<div class="a" style="top:284px;font:12.33px/15px 'Liberation Mono',monospace;color:#000;white-space:pre;left:502.5px;width:30px;text-align:center;">D</div>
<div class="a" style="top:284px;font:12.33px/15px 'Liberation Mono',monospace;color:#000;white-space:pre;right:434px;text-align:right;">2022 641</div>
<div class="a" style="left:406px;top:326px;width:119px;height:11px;background:#add8e6;border:1px solid #000;"></div>
<div class="a" style="top:327px;font:8.4px/10px 'Liberation Sans',sans-serif;color:#000;white-space:pre;left:386.5px;width:158px;text-align:center;letter-spacing:-0.25px;-webkit-text-stroke:0.15px #000;">PLUMBING</div>
<div class="a" style="left:524px;top:326px;width:119px;height:11px;background:#add8e6;border:1px solid #000;"></div>
<div class="a" style="top:327px;font:8.4px/10px 'Liberation Sans',sans-serif;color:#000;white-space:pre;left:504.5px;width:158px;text-align:center;letter-spacing:-0.25px;-webkit-text-stroke:0.15px #000;">FIREPLACES</div>
<div class="a" style="left:406px;top:336px;width:119px;height:67px;border:1px solid #000;"></div>
<div class="a" style="left:524px;top:336px;width:119px;height:81px;border:1px solid #000;"></div>
<div class="a" style="left:406px;top:346px;width:237px;height:1px;background:#000"></div>
<div class="a" style="left:406px;top:360px;width:237px;height:1px;background:#000"></div>
<div class="a" style="left:406px;top:374px;width:237px;height:1px;background:#000"></div>
<div class="a" style="left:406px;top:388px;width:237px;height:1px;background:#000"></div>
<div class="a" style="left:524px;top:402px;width:119px;height:1px;background:#000"></div>
<div class="a" style="left:407px;top:361px;width:117px;height:13px;background:#f5f5fc;"></div>
<div class="a" style="left:525px;top:361px;width:117px;height:13px;background:#f5f5fc;"></div>
<div class="a" style="left:407px;top:389px;width:117px;height:13px;background:#f5f5fc;"></div>
<div class="a" style="left:525px;top:389px;width:117px;height:13px;background:#f5f5fc;"></div>
<div class="a" style="left:481px;top:336px;width:1px;height:11px;background:#000"></div>
<div class="a" style="left:599px;top:336px;width:1px;height:11px;background:#000"></div>
<div class="a" style="left:599px;top:402px;width:1px;height:15px;background:#000"></div>
<div class="a" style="top:337px;font:8.4px/10px 'Liberation Sans',sans-serif;color:#000;white-space:pre;left:386.5px;width:115px;text-align:center;letter-spacing:-0.25px;-webkit-text-stroke:0.15px #000;">FIXTURE</div>
<div class="a" style="top:337px;font:8.4px/10px 'Liberation Sans',sans-serif;color:#000;white-space:pre;left:461.5px;width:83px;text-align:center;letter-spacing:-0.25px;-webkit-text-stroke:0.15px #000;">COUNT</div>
<div class="a" style="top:337px;font:8.4px/10px 'Liberation Sans',sans-serif;color:#000;white-space:pre;left:504.5px;width:115px;text-align:center;letter-spacing:-0.25px;-webkit-text-stroke:0.15px #000;">TYPE</div>
<div class="a" style="top:337px;font:8.4px/10px 'Liberation Sans',sans-serif;color:#000;white-space:pre;left:579.5px;width:83px;text-align:center;letter-spacing:-0.25px;-webkit-text-stroke:0.15px #000;">COUNT</div>
<div class="a" style="top:405px;font:8.4px/10px 'Liberation Sans',sans-serif;color:#000;white-space:pre;left:504.5px;width:115px;text-align:center;letter-spacing:-0.25px;-webkit-text-stroke:0.15px #000;">OPENINGS</div>
<div class="a" style="top:349px;font:12.33px/15px 'Liberation Mono',monospace;color:#000;white-space:pre;left:408px;">FULLBATH</div>
<div class="a" style="top:349px;font:12.33px/15px 'Liberation Mono',monospace;color:#000;white-space:pre;right:530px;text-align:right;">2</div>
<div class="a" style="left:644px;top:0px;width:404px;height:545px;background:#fff;border:1px solid #000;"></div>
<div class="a" style="left:659px;top:355px;width:374px;height:174px;background:#add8e6;border:1px solid #6a6a6a"></div>
<div class="a" style="left:812px;top:328px;width:41px;height:28px;background:#ffb6c1;border:1px solid #6a6a6a"></div>
<div class="a" style="left:765px;top:515px;width:41px;height:14px;background:#d3d3d3;border:1px solid #6a6a6a"></div>
<div class="a" style="top:355px;font:8.4px/10px 'Liberation Sans',sans-serif;color:#3a5468;white-space:pre;left:830.5px;width:30px;text-align:center;">56</div>
<div class="a" style="top:436px;font:8.4px/10px 'Liberation Sans',sans-serif;color:#3a5468;white-space:pre;left:650.5px;width:30px;text-align:center;">26</div>
<div class="a" style="top:436px;font:8.4px/10px 'Liberation Sans',sans-serif;color:#3a5468;white-space:pre;left:1011.0px;width:30px;text-align:center;">26</div>
<div class="a" style="top:504px;font:8.4px/10px 'Liberation Sans',sans-serif;color:#3a5468;white-space:pre;left:770.0px;width:30px;text-align:center;">6</div>
<div class="a" style="top:518px;font:8.4px/10px 'Liberation Sans',sans-serif;color:#3a5468;white-space:pre;left:697.5px;width:30px;text-align:center;">16</div>
<div class="a" style="top:516px;font:8.4px/10px 'Liberation Sans',sans-serif;color:#3a5468;white-space:pre;left:747.0px;width:30px;text-align:center;">2</div>
<div class="a" style="top:516px;font:8.4px/10px 'Liberation Sans',sans-serif;color:#3a5468;white-space:pre;left:795.5px;width:30px;text-align:center;">2</div>
<div class="a" style="top:518px;font:8.4px/10px 'Liberation Sans',sans-serif;color:#3a5468;white-space:pre;left:904.0px;width:30px;text-align:center;">34</div>
<div class="a" style="top:329px;font:bold 8px/10px 'Liberation Mono',monospace;color:#2a2a2a;white-space:pre;left:792.5px;width:80px;text-align:center;">B.112</div>
<div class="a" style="top:340px;font:bold 8px/10px 'Liberation Mono',monospace;color:#2a2a2a;white-space:pre;left:792.5px;width:80px;text-align:center;">24 SqFt</div>
<div class="a" style="top:436px;font:bold 8px/10px 'Liberation Mono',monospace;color:#2a2a2a;white-space:pre;left:805.5px;width:80px;text-align:center;">A.1</div>
<div class="a" style="top:447px;font:bold 8px/10px 'Liberation Mono',monospace;color:#2a2a2a;white-space:pre;left:805.5px;width:80px;text-align:center;">1444 SqFt</div>
<div class="a" style="top:516px;font:bold 8px/10px 'Liberation Mono',monospace;color:#2a2a2a;white-space:pre;left:745.5px;width:80px;text-align:center;">C</div>
<div class="a" style="left:644px;top:543px;width:404px;height:46px;background:#d3d3d3;border:1px solid #000;"></div>
<div class="a" style="left:645px;top:544px;width:402px;height:14px;background:#add8e6;"></div>
<div class="a" style="left:645px;top:558px;width:402px;height:15px;background:#ffb6c1;"></div>
<div class="a" style="top:543px;font:bold 13.9px/17px 'Liberation Mono',monospace;color:#222;white-space:pre;left:646px;">A.0  1    SR16U2R6D2R34U26L56D26.</div>
<div class="a" style="top:558px;font:bold 13.9px/17px 'Liberation Mono',monospace;color:#222;white-space:pre;left:646px;">B.0  112  U26R23SU4R6D4L6.</div>
<div class="a" style="top:573px;font:bold 13.9px/17px 'Liberation Mono',monospace;color:#222;white-space:pre;left:646px;">C.0  105  R16SU2R6D2L6.</div>
<div class="a" style="left:644px;top:592px;width:201px;height:11px;background:#add8e6;border:1px solid #000;"></div>
<div class="a" style="left:644px;top:602px;width:201px;height:16px;border:1px solid #000;"></div>
<div class="a" style="left:744px;top:592px;width:1px;height:26px;background:#000"></div>
<div class="a" style="top:593px;font:8.4px/10px 'Liberation Sans',sans-serif;color:#000;white-space:pre;left:624.5px;width:140px;text-align:center;letter-spacing:-0.25px;-webkit-text-stroke:0.15px #000;">PRINT DATE</div>
<div class="a" style="top:593px;font:8.4px/10px 'Liberation Sans',sans-serif;color:#000;white-space:pre;left:724.5px;width:140px;text-align:center;letter-spacing:-0.25px;-webkit-text-stroke:0.15px #000;">LAST SAVED</div>
<div class="a" style="top:604px;font:12.33px/15px 'Liberation Mono',monospace;color:#000;white-space:pre;left:644.5px;width:100px;text-align:center;">10/26/2023</div>
<div class="a" style="top:604px;font:12.33px/15px 'Liberation Mono',monospace;color:#000;white-space:pre;left:744.0px;width:100px;text-align:center;">2/14/2023</div>
<div class="a" style="left:847px;top:592px;width:201px;height:11px;background:#add8e6;border:1px solid #000;"></div>
<div class="a" style="top:593px;font:8.4px/10px 'Liberation Sans',sans-serif;color:#000;white-space:pre;left:827.5px;width:240px;text-align:center;letter-spacing:-0.25px;-webkit-text-stroke:0.15px #000;">BUILDING VALUE SUMMARY</div>
<div class="a" style="left:847px;top:602px;width:201px;height:71px;border:1px solid #000;"></div>
<div class="a" style="left:848px;top:617px;width:199px;height:13px;background:#f5f5fc;"></div>
<div class="a" style="left:848px;top:645px;width:199px;height:13px;background:#f5f5fc;"></div>
<div class="a" style="left:847px;top:616px;width:201px;height:1px;background:#000"></div>
<div class="a" style="left:847px;top:644px;width:201px;height:1px;background:#000"></div>
<div class="a" style="left:847px;top:630px;width:101px;height:1px;background:#000"></div>
<div class="a" style="left:847px;top:658px;width:101px;height:1px;background:#000"></div>
<div class="a" style="left:947px;top:629px;width:101px;height:3px;background:#000"></div>
<div class="a" style="left:947px;top:657px;width:101px;height:3px;background:#000"></div>
<div class="a" style="left:946px;top:602px;width:2px;height:71px;background:#000"></div>
<div class="a" style="top:605px;font:bold 9.4px/11px 'Liberation Mono',monospace;color:#000;white-space:pre;left:849px;">RPCN</div>
<div class="a" style="top:604px;font:12.33px/15px 'Liberation Mono',monospace;color:#000;white-space:pre;right:5px;text-align:right;">$110,357</div>
<div class="a" style="top:619px;font:bold 9.4px/11px 'Liberation Mono',monospace;color:#000;white-space:pre;left:849px;">DEP</div>
<div class="a" style="top:618px;font:12.33px/15px 'Liberation Mono',monospace;color:#000;white-space:pre;right:5px;text-align:right;">$8,276</div>
<div class="a" style="top:618px;font:12.33px/15px 'Liberation Mono',monospace;color:#000;white-space:pre;left:949.5px;">–</div>
<div class="a" style="top:633px;font:bold 9.4px/11px 'Liberation Mono',monospace;color:#000;white-space:pre;left:849px;">RCLND</div>
<div class="a" style="top:632px;font:12.33px/15px 'Liberation Mono',monospace;color:#000;white-space:pre;right:5px;text-align:right;">$102,081</div>
<div class="a" style="top:647px;font:bold 9.4px/11px 'Liberation Mono',monospace;color:#000;white-space:pre;left:849px;">OBS F/E</div>
<div class="a" style="top:646px;font:12.33px/15px 'Liberation Mono',monospace;color:#000;white-space:pre;right:5px;text-align:right;">$0</div>
<div class="a" style="top:646px;font:12.33px/15px 'Liberation Mono',monospace;color:#000;white-space:pre;left:949.5px;">–</div>
<div class="a" style="top:661px;font:bold 9.4px/11px 'Liberation Mono',monospace;color:#000;white-space:pre;left:849px;">LCF</div>
<div class="a" style="top:660px;font:12.33px/15px 'Liberation Mono',monospace;color:#000;white-space:pre;right:5px;text-align:right;">$102,081</div>
<div class="a" style="top:660px;font:12.33px/15px 'Liberation Mono',monospace;color:#000;white-space:pre;right:106px;text-align:right;">100%</div>
<div class="a" style="left:847px;top:681px;width:201px;height:118px;background:#fff;border:1px solid #000;"></div>
<div class="a" style="left:847px;top:681px;width:201px;height:21px;background:#ffff00;border:1px solid #000;"></div>
<div class="a" style="top:684px;font:bold 13.8px/17px 'Liberation Mono',monospace;color:#000;white-space:pre;left:847.0px;width:200px;text-align:center;">PARCEL SUMMARY</div>
<div class="a" style="left:848px;top:716px;width:199px;height:13px;background:#f5f5fc;"></div>
<div class="a" style="left:848px;top:745px;width:199px;height:12px;background:#f5f5fc;"></div>
<div class="a" style="left:848px;top:758px;width:199px;height:13px;background:#f5f5fc;"></div>
<div class="a" style="left:847px;top:715px;width:101px;height:1px;background:#000"></div>
<div class="a" style="left:847px;top:729px;width:101px;height:1px;background:#000"></div>
<div class="a" style="left:847px;top:742px;width:101px;height:1px;background:#000"></div>
<div class="a" style="left:847px;top:757px;width:101px;height:1px;background:#000"></div>
<div class="a" style="left:947px;top:715px;width:101px;height:1px;background:#000"></div>
<div class="a" style="left:947px;top:729px;width:101px;height:1px;background:#000"></div>
<div class="a" style="left:947px;top:742px;width:101px;height:3px;background:#000"></div>
<div class="a" style="left:947px;top:757px;width:101px;height:1px;background:#000"></div>
<div class="a" style="left:847px;top:771px;width:201px;height:2px;background:#000"></div>
<div class="a" style="left:946px;top:701px;width:2px;height:71px;background:#000"></div>
<div class="a" style="top:703px;font:bold 9.4px/11px 'Liberation Mono',monospace;color:#000;white-space:pre;left:849px;">TOTAL BLDG VALUE</div>
<div class="a" style="top:703px;font:12.33px/15px 'Liberation Mono',monospace;color:#000;white-space:pre;right:5px;text-align:right;">$102,081</div>
<div class="a" style="top:717px;font:bold 9.4px/11px 'Liberation Mono',monospace;color:#000;white-space:pre;left:849px;">OBLDG VALUE</div>
<div class="a" style="top:717px;font:12.33px/15px 'Liberation Mono',monospace;color:#000;white-space:pre;right:5px;text-align:right;">$2,900</div>
<div class="a" style="top:715px;font:14px/17px 'Liberation Mono',monospace;color:#000;white-space:pre;left:948.5px;">+</div>
<div class="a" style="top:731px;font:bold 9.4px/11px 'Liberation Mono',monospace;color:#000;white-space:pre;left:849px;">LAND VALUE</div>
<div class="a" style="top:731px;font:12.33px/15px 'Liberation Mono',monospace;color:#000;white-space:pre;right:5px;text-align:right;">$23,924</div>
<div class="a" style="top:729px;font:14px/17px 'Liberation Mono',monospace;color:#000;white-space:pre;left:948.5px;">+</div>
<div class="a" style="top:745px;font:bold 9.4px/11px 'Liberation Mono',monospace;color:#000;white-space:pre;left:849px;">APPRAISED VALUE</div>
<div class="a" style="top:745px;font:12.33px/15px 'Liberation Mono',monospace;color:#000;white-space:pre;right:5px;text-align:right;">$128,905</div>
<div class="a" style="top:759px;font:bold 9.4px/11px 'Liberation Mono',monospace;color:#000;white-space:pre;left:849px;">DEFERRED VALUE</div>
<div class="a" style="top:759px;font:12.33px/15px 'Liberation Mono',monospace;color:#000;white-space:pre;right:5px;text-align:right;">$0</div>
<div class="a" style="top:759px;font:12.33px/15px 'Liberation Mono',monospace;color:#000;white-space:pre;left:949.5px;">–</div>
<div class="a" style="left:902px;top:772px;width:146px;height:27px;background:#ffff00;border:1px solid #000;"></div>
<div class="a" style="top:774px;font:bold 9.4px/11px 'Liberation Mono',monospace;color:#000;white-space:pre;left:844.5px;width:60px;text-align:center;">TAXABLE</div>
<div class="a" style="top:784px;font:bold 9.4px/11px 'Liberation Mono',monospace;color:#000;white-space:pre;left:844.5px;width:60px;text-align:center;">VALUE</div>
<div class="a" style="top:773px;font:bold 19.5px/23px 'Liberation Sans',sans-serif;color:#e01010;white-space:pre;right:5px;text-align:right;">$128,905</div>
</body></html>
